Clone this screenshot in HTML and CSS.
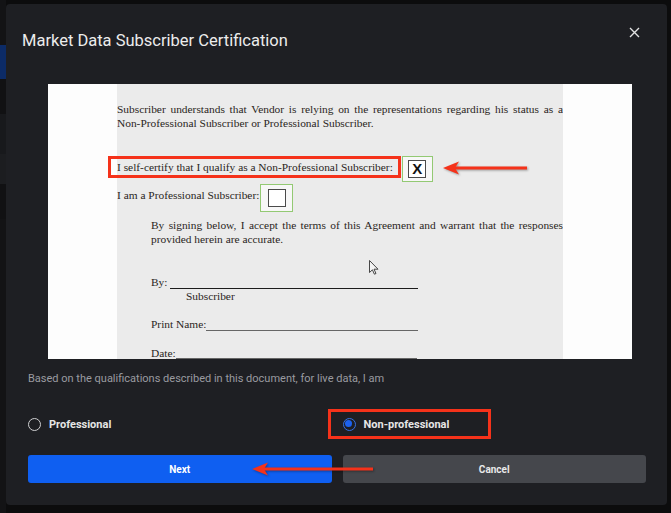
FILE: index.html
```html
<!DOCTYPE html>
<html lang="en">
<head>
    <meta charset="UTF-8">
    <title>Market Data Subscriber Certification</title>
    <link rel="stylesheet" href="styles.css">
</head>
<body>
<div class="app">
    <div class="rail">
        <span class="rail-top"></span>
        <span class="rail-item on"></span>
        <span class="rail-item"></span>
        <span class="rail-item alt"></span>
        <span class="rail-item alt2"></span>
        <span class="rail-item"></span>
        <span class="rail-rest"></span>
    </div>
</div>

<div class="modal">
    <header class="modal-head">
        <h1>Market Data Subscriber Certification</h1>
        <button class="close" aria-label="Close">
            <svg width="11" height="11" viewBox="0 0 11 11"><path d="M1 1L10 10M10 1L1 10" stroke="#e2e2e2" stroke-width="1.4" fill="none"/></svg>
        </button>
    </header>

    <div class="doc">
        <div class="doc-side"></div>
        <div class="doc-page">
            <p class="para">
                <span class="jl">Subscriber understands that Vendor is relying on the representations regarding his status as a</span>
                <span>Non-Professional Subscriber or Professional Subscriber.</span>
            </p>
            <div class="cert-row">
                <span class="flag">I self-certify that I qualify as a Non-Professional Subscriber:</span>
                <span class="tick"><span class="tick-box">X</span></span>
            </div>
            <div class="pro-row">
                <span class="pro-label">I am a Professional Subscriber:</span>
                <span class="tick tick-pro"><span class="tick-box"></span></span>
            </div>
            <div class="sign">
                <p class="para">
                    <span class="jl">By signing below, I accept the terms of this Agreement and warrant that the responses</span>
                    <span>provided herein are accurate.</span>
                </p>
                <p class="by">By: <span class="blank by-line"></span></p>
                <p class="by-sub">Subscriber</p>
                <p class="print">Print Name:<span class="blank print-line"></span></p>
                <p class="date">Date:<span class="blank date-line"></span></p>
            </div>
        </div>
        <div class="doc-side"></div>
        <svg class="cursor" width="10" height="15" viewBox="0 0 10 15"><path d="M0.5 0.5V12.5L3.4 9.8L5.4 14.2L7 13.5L5 9.2H9Z" fill="#f4f4f4" stroke="#333" stroke-width="0.9"/></svg>
    </div>

    <p class="hint">Based on the qualifications described in this document, for live data, I am</p>

    <div class="choices">
        <label class="choice"><span class="radio"></span>Professional</label>
        <label class="choice picked"><span class="radio checked"></span>Non-professional</label>
    </div>

    <div class="actions">
        <button class="btn primary">Next</button>
        <button class="btn secondary">Cancel</button>
    </div>

    <svg class="arrow arrow-doc" width="86" height="16" viewBox="0 0 86 16">
        <path d="M12 8H85" stroke="#f5321a" stroke-width="3"/>
        <path d="M1 8L17 1.5L13 8L17 14.5Z" fill="#f5321a"/>
    </svg>
    <svg class="arrow arrow-next" width="124" height="16" viewBox="0 0 124 16">
        <path d="M12 8H122" stroke="#f5321a" stroke-width="3"/>
        <path d="M1 8L17 1.5L13 8L17 14.5Z" fill="#f5321a"/>
    </svg>
</div>
</body>
</html>
```

FILE: styles.css
```css
*{
    margin:0;
    padding:0;
    box-sizing:border-box;
}
html,body{
    height:100%;
}
body{
    background-color:#0c0c0d;
    font-family:Roboto, "Liberation Sans", sans-serif;
    overflow:hidden;
}
.app{
    height:100%;
    display:flex;
}
.rail{
    width:6px;
    display:flex;
    flex-direction:column;
}
.rail span{
    display:block;
}
.rail-top{
    height:45px;
    background-color:#131315;
}
.rail-item{
    height:35px;
    background-color:#111113;
}
.rail-item.on{
    height:34px;
    background-color:#0c2b67;
}
.rail-item.alt{
    height:40px;
    background-color:#18191c;
}
.rail-item.alt2{
    height:30px;
    background-color:#1c1d20;
}
.rail-rest{
    flex:1;
    background-color:#131315;
}

/* modal over the app */
.modal{
    position:absolute;
    left:6px;
    top:4px;
    width:661px;
    height:501px;
    padding:0 21px 22px 22px;
    background-color:#1e1f23;
    border-radius:4px;
}
.modal-head{
    display:flex;
    justify-content:space-between;
    align-items:flex-start;
    padding-top:23px;
}
.modal-head h1{
    margin:4px 0 0 -6px;
    font-size:16.5px;
    line-height:20px;
    font-weight:400;
    color:#ececec;
}
.close{
    margin-right:6px;
    border:0;
    background:none;
    width:11px;
    height:11px;
    display:block;
}
.close svg{
    display:block;
}

/* document preview */
.doc{
    position:relative;
    display:flex;
    height:275px;
    margin:33px 14px 0 20px;
    overflow:hidden;
}
.doc-side{
    flex:1;
    background-color:#fdfdfd;
}
.doc-page{
    flex:0 0 446px;
    padding-top:18px;
    background-color:#ebebeb;
    font-family:"Liberation Serif", "Times New Roman", serif;
    font-size:11.4px;
    line-height:14px;
    color:#2a2522;
}
.para span{
    display:block;
    white-space:nowrap;
}
.para .jl{
    text-align:justify;
    text-align-last:justify;
}
.cert-row{
    display:flex;
    align-items:flex-start;
    margin-top:26px;
}
.flag{
    margin-left:-9px;
    padding:1px 5px 1px 6px;
    border:3px solid #f5321a;
    white-space:nowrap;
}
.tick{
    display:flex;
    align-items:center;
    justify-content:center;
    width:31px;
    height:26px;
    margin-left:1px;
    border:1px solid #93c973;
    background-color:#f7f7f7;
}
.tick-box{
    display:block;
    width:18px;
    height:18px;
    border:1.5px solid #4a4a4a;
    background-color:#fff;
    font-family:"Liberation Sans", Arial, sans-serif;
    font-size:15px;
    font-weight:700;
    line-height:15px;
    text-align:center;
    color:#111;
}
.pro-row{
    display:flex;
    align-items:flex-start;
    margin-top:2px;
}
.pro-label{
    margin-top:4px;
}
.tick-pro{
    width:33px;
    height:28px;
    margin-left:1px;
}
.sign{
    margin-top:6px;
    padding-left:34px;
}
.sign .para{
    width:412px;
}
.by{
    margin-top:29px;
}
.by-sub{
    padding-left:35px;
}
.print{
    margin-top:14px;
}
.date{
    margin-top:15px;
}
.blank{
    display:inline-block;
    vertical-align:-3px;
    border-bottom:1px solid #1c1c1c;
}
.by-line{
    width:248px;
}
.print-line{
    width:212px;
    border-bottom-color:#666;
}
.date-line{
    width:241px;
    vertical-align:-2px;
    border-bottom-color:#666;
}
.cursor{
    position:absolute;
    left:321px;
    top:176px;
}

.hint{
    margin-top:13px;
    font-size:11px;
    line-height:14px;
    color:#9a9ba0;
}

.choices{
    display:grid;
    grid-template-columns:1fr 1fr;
    column-gap:11px;
    margin-top:23px;
}
.choice{
    display:flex;
    align-items:center;
    height:30px;
    font-size:11px;
    font-weight:700;
    color:#e6e6e6;
}
.choice.picked{
    width:163px;
    margin-left:-15px;
    padding-left:12px;
    border:3px solid #f5321a;
}
.radio{
    position:relative;
    width:13px;
    height:13px;
    margin-right:8px;
    border:1.5px solid #cfcfd1;
    border-radius:50%;
}
.radio.checked{
    border-color:#3570e4;
}
.radio.checked:after{
    content:'';
    position:absolute;
    left:1.5px;
    top:1.5px;
    width:7px;
    height:7px;
    border-radius:50%;
    background-color:#1c62f0;
}

.actions{
    display:grid;
    grid-template-columns:1fr 1fr;
    column-gap:11px;
    margin-top:16px;
}
.btn{
    height:28px;
    border:0;
    border-radius:3px;
    font-family:Roboto, "Liberation Sans", sans-serif;
    font-size:10px;
    font-weight:700;
    color:#fff;
}
.btn.primary{
    background-color:#0f5ff1;
}
.btn.secondary{
    background-color:#45474c;
    color:#e9e9e9;
}

/* annotation arrows */
.arrow{
    position:absolute;
    filter:drop-shadow(1px 1px 1px rgba(0,0,0,.35));
}
.arrow-doc{
    left:436px;
    top:156px;
}
.arrow-next{
    left:245px;
    top:457px;
}
```
